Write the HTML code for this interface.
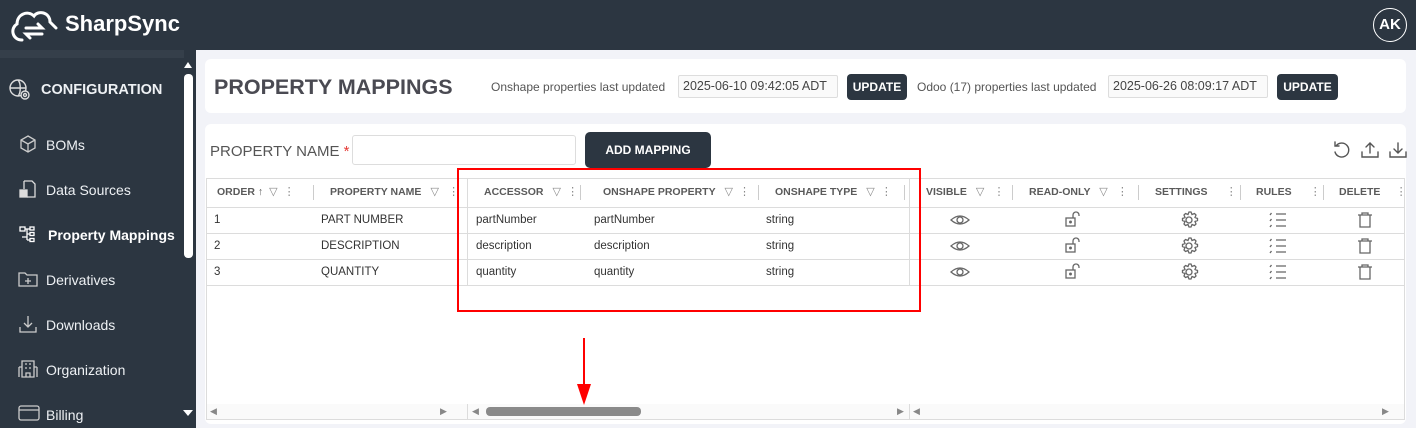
<!DOCTYPE html>
<html><head><meta charset="utf-8"><style>
*{box-sizing:border-box;margin:0;padding:0}
body{width:1416px;height:428px;overflow:hidden;background:#f2f3f8;font-family:"Liberation Sans",sans-serif;position:relative}
.a{position:absolute}
.hdr{left:0;top:0;width:1416px;height:50px;background:#2c3641}
.side{left:0;top:50px;width:196px;height:378px;background:#2c3641}
.nav{position:absolute;left:46px;color:#eef1f4;font-size:14px}
.ico{position:absolute;left:18px}
.card{background:#fff;border-radius:6px}
.th{position:absolute;top:178px;height:29px;line-height:29px;font-size:10.5px;color:#5a5a5a;font-weight:bold;letter-spacing:0}
.td{position:absolute;font-size:11.5px;color:#333}
.hl{position:absolute;height:1px;background:#dcdcdc}
.vl{position:absolute;width:1px;background:#dcdcdc}
.sep{position:absolute;top:185px;width:1px;height:15px;background:#ccc}
.f{color:#888;font-weight:normal;font-size:11px}
.btn{position:absolute;background:#2c3641;color:#fff;font-size:12px;font-weight:bold;text-align:center;border-radius:4px}
.ts{position:absolute;border:1px solid #ddd;background:#fafafa;font-size:12.5px;color:#444;height:23px;line-height:21px;padding:0 4px;border-radius:2px}
</style></head><body>
<div class="a hdr"></div>
<svg class="a" style="left:8px;top:6px" width="50" height="36" viewBox="0 0 50 36" fill="none" stroke="#fff" stroke-width="3" stroke-linecap="round"><path d="M14 34 C4 34 2 22 9 18 C9 8 20 4 26 10 C30 4 42 6 42 16 L48 22"/><path d="M18 22 h16 l-4 -4 M34 28 h-16 l4 4"/></svg>
<div class="a" style="left:65px;top:11px;color:#fff;font-size:22px;font-weight:bold">SharpSync</div>
<div class="a" style="left:1373px;top:8px;width:34px;height:34px;border:1.5px solid #fff;border-radius:50%;color:#fff;font-weight:bold;font-size:15px;text-align:center;line-height:31px">AK</div>

<div class="a side"></div>
<div class="a" style="left:0;top:50px;width:184px;height:8px;background:#353f4a"></div>
<div class="a" style="left:184px;top:74px;width:9px;height:184px;background:#fff;border-radius:4px"></div>
<div class="a" style="left:184px;top:62px;width:0;height:0;border:4.5px solid transparent;border-bottom:6px solid #fff;border-top:0"></div>
<div class="a" style="left:183px;top:410px;width:0;height:0;border:5px solid transparent;border-top:6px solid #fff;border-bottom:0"></div>
<svg class="ico" style="left:8px;top:78px" width="24" height="24" viewBox="0 0 24 24" fill="none" stroke="#ddd" stroke-width="1.4"><circle cx="10" cy="10" r="8"/><path d="M2 10h16M10 2c3 3 3 13 0 16"/><circle cx="17" cy="17" r="4" fill="#2c3641"/><circle cx="17" cy="17" r="1.5"/></svg>
<div class="nav" style="left:41px;top:82px;font-weight:bold;font-size:14.5px">CONFIGURATION</div>
<svg class="ico" style="top:134px" width="20" height="20" viewBox="0 0 20 20" fill="none" stroke="#ccc" stroke-width="1.3"><path d="M10 2l7 4v8l-7 4-7-4V6z M3 6l7 4 7-4 M10 10v8"/></svg>
<div class="nav" style="top:137px">BOMs</div>
<svg class="ico" style="top:179px" width="20" height="20" viewBox="0 0 20 20" fill="none" stroke="#ddd" stroke-width="1.3"><path d="M6 2h8l3 3v13H9M6 2v8"/><rect x="2" y="11" width="7" height="7" fill="#ddd"/></svg>
<div class="nav" style="top:182px">Data Sources</div>
<svg class="ico" style="top:224px" width="20" height="20" viewBox="0 0 20 20" fill="none" stroke="#fff" stroke-width="1.3"><rect x="2" y="3" width="5" height="4"/><path d="M7 5h5M9 5v11M9 10h3M4 13h5M9 16h3"/><rect x="12" y="3" width="4" height="3"/><rect x="12" y="8.5" width="4" height="3"/><rect x="12" y="14.5" width="4" height="3"/></svg>
<div class="nav" style="top:227px;font-weight:bold;color:#fff;left:48px">Property Mappings</div>
<svg class="ico" style="top:269px" width="20" height="20" viewBox="0 0 20 20" fill="none" stroke="#ccc" stroke-width="1.3"><path d="M1 4h6l2 2h10v11H1z M10 9v6M7 12h6"/></svg>
<div class="nav" style="top:272px">Derivatives</div>
<svg class="ico" style="top:314px" width="20" height="20" viewBox="0 0 20 20" fill="none" stroke="#ccc" stroke-width="1.3"><path d="M10 2v11M6 9l4 4 4-4M2 13v5h16v-5"/></svg>
<div class="nav" style="top:317px">Downloads</div>
<svg class="ico" style="top:359px" width="20" height="20" viewBox="0 0 20 20" fill="none" stroke="#ccc" stroke-width="1.3"><path d="M4 2h12v16H4zM1 8h3M16 8h3M1 8v10M19 8v10M8 18v-4h4v4M7 5h2M11 5h2M7 9h2M11 9h2"/></svg>
<div class="nav" style="top:362px">Organization</div>
<svg class="ico" style="top:404px" width="22" height="18" viewBox="0 0 22 18" fill="none" stroke="#ccc" stroke-width="1.3"><rect x="1" y="2" width="20" height="14" rx="2"/><path d="M1 6h20"/></svg>
<div class="nav" style="top:407px">Billing</div>

<div class="a card" style="left:205px;top:59px;width:1201px;height:54px"></div>
<div class="a" style="left:214px;top:75px;font-size:21.5px;color:#4a4a52;font-weight:bold">PROPERTY MAPPINGS</div>
<div class="a" style="left:491px;top:80px;font-size:12px;color:#555">Onshape properties last updated</div>
<div class="ts" style="left:678px;top:75px;width:160px">2025-06-10 09:42:05 ADT</div>
<div class="btn" style="left:847px;top:74px;width:60px;height:26px;line-height:26px">UPDATE</div>
<div class="a" style="left:917px;top:80px;font-size:12px;color:#555">Odoo (17) properties last updated</div>
<div class="ts" style="left:1108px;top:75px;width:160px">2025-06-26 08:09:17 ADT</div>
<div class="btn" style="left:1277px;top:74px;width:61px;height:26px;line-height:26px">UPDATE</div>

<div class="a card" style="left:205px;top:124px;width:1201px;height:300px"></div>
<div class="a" style="left:210px;top:143px;font-size:15px;color:#555">PROPERTY NAME <span style="color:#e53935">*</span></div>
<div class="a" style="left:352px;top:135px;width:224px;height:30px;border:1px solid #ddd;border-radius:3px"></div>
<div class="btn" style="left:585px;top:132px;width:126px;height:36px;line-height:36px;border-radius:5px">ADD MAPPING</div>
<svg class="a" style="left:1332px;top:140px" width="76" height="20" viewBox="0 0 76 20" fill="none" stroke="#555" stroke-width="1.4" stroke-linecap="round"><path d="M4 6 A7 7 0 1 1 3 12 M3 2v4h4"/><path d="M38 3v10M34 7l4-4 4 4M30 12v5h16v-5"/><path d="M66 3v10M62 9l4 4 4-4M58 12v5h16v-5"/></svg>

<div class="a" style="left:206px;top:178px;width:1199px;height:242px;border:1px solid #dcdcdc;background:#fff"></div>
<div class="hl" style="left:206px;top:207px;width:1199px"></div>
<div class="hl" style="left:206px;top:233px;width:1199px"></div>
<div class="hl" style="left:206px;top:259px;width:1199px"></div>
<div class="hl" style="left:206px;top:285px;width:1199px"></div>
<div class="vl" style="left:467px;top:178px;height:107px"></div>
<div class="vl" style="left:909px;top:178px;height:107px"></div>
<div class="a" style="left:207px;top:404px;width:1197px;height:15px;background:#fafafa"></div>
<div class="vl" style="left:467px;top:404px;height:15px"></div>
<div class="vl" style="left:909px;top:404px;height:15px"></div>
<div class="a" style="left:486px;top:407px;width:155px;height:9px;background:#8a8a8a;border-radius:4px"></div>
<div class="a" style="left:210px;top:406px;font-size:9px;color:#888">◀</div>
<div class="a" style="left:440px;top:406px;font-size:9px;color:#888">▶</div>
<div class="a" style="left:472px;top:406px;font-size:9px;color:#888">◀</div>
<div class="a" style="left:897px;top:406px;font-size:9px;color:#888">▶</div>
<div class="a" style="left:913px;top:406px;font-size:9px;color:#888">◀</div>
<div class="a" style="left:1382px;top:406px;font-size:9px;color:#888">▶</div>

<div class="th" style="left:217px">ORDER ↑ <span class="f">&nbsp;▽ &nbsp;⋮</span></div>
<div class="sep" style="left:313px"></div>
<div class="th" style="left:330px">PROPERTY NAME <span class="f">&nbsp;&nbsp;▽ &nbsp;&nbsp;⋮</span></div>
<div class="th" style="left:484px">ACCESSOR <span class="f">&nbsp;&nbsp;▽ &nbsp;⋮</span></div>
<div class="sep" style="left:580px"></div>
<div class="th" style="left:603px">ONSHAPE PROPERTY <span class="f">&nbsp;&nbsp;▽ &nbsp;⋮</span></div>
<div class="sep" style="left:758px"></div>
<div class="th" style="left:775px">ONSHAPE TYPE <span class="f">&nbsp;&nbsp;▽ &nbsp;⋮</span></div>
<div class="sep" style="left:904px"></div>
<div class="th" style="left:926px">VISIBLE <span class="f">&nbsp;&nbsp;▽ &nbsp;&nbsp;⋮</span></div>
<div class="sep" style="left:1012px"></div>
<div class="th" style="left:1029px">READ-ONLY <span class="f">&nbsp;&nbsp;▽ &nbsp;&nbsp;⋮</span></div>
<div class="sep" style="left:1138px"></div>
<div class="th" style="left:1155px">SETTINGS <span class="f">&nbsp;&nbsp;&nbsp;&nbsp;&nbsp;⋮</span></div>
<div class="sep" style="left:1240px"></div>
<div class="th" style="left:1256px">RULES <span class="f">&nbsp;&nbsp;&nbsp;&nbsp;&nbsp;⋮</span></div>
<div class="sep" style="left:1323px"></div>
<div class="th" style="left:1339px">DELETE <span class="f">&nbsp;&nbsp;&nbsp;&nbsp;⋮</span></div>

<div class="td" style="left:214px;top:214px">1</div><div class="td" style="left:321px;top:214px">PART NUMBER</div><div class="td" style="left:476px;top:214px">partNumber</div><div class="td" style="left:594px;top:214px">partNumber</div><div class="td" style="left:766px;top:214px">string</div>
<div class="td" style="left:214px;top:240px">2</div><div class="td" style="left:321px;top:240px">DESCRIPTION</div><div class="td" style="left:476px;top:240px">description</div><div class="td" style="left:594px;top:240px">description</div><div class="td" style="left:766px;top:240px">string</div>
<div class="td" style="left:214px;top:266px">3</div><div class="td" style="left:321px;top:266px">QUANTITY</div><div class="td" style="left:476px;top:266px">quantity</div><div class="td" style="left:594px;top:266px">quantity</div><div class="td" style="left:766px;top:266px">string</div>

<svg class="a" style="left:940px;top:207px" width="460" height="78" viewBox="0 0 460 78" fill="none" stroke="#666" stroke-width="1.3">
<defs><g id="r">
<path d="M11 13 q9 -8 18 0 q-9 8 -18 0z"/><circle cx="20" cy="13" r="3"/>
<rect x="126" y="11" width="9" height="8"/><circle cx="130.5" cy="15" r="0.8" fill="#666"/><path d="M133 11 v-3 a3 3 0 0 1 6 0 v1"/>
<circle cx="249" cy="13" r="3"/><path d="M249 5 l2 0 l1 2.5 l2.5 -1 l1.5 1.5 l-1 2.5 l2.5 1 v2 l-2.5 1 l1 2.5 l-1.5 1.5 l-2.5 -1 l-1 2.5 h-2 l-1 -2.5 l-2.5 1 l-1.5 -1.5 l1 -2.5 l-2.5 -1 v-2 l2.5 -1 l-1 -2.5 l1.5 -1.5 l2.5 1 z"/>
<path d="M336 7h10M336 13h10M336 19h10M330 8l1.5 -2M330 14l1.5 -2M330 20l1.5 -2"/>
<path d="M418 8h14M422 8v-2h6v2M420 8v12h10v-12"/>
</g></defs>
<use href="#r"/><use href="#r" y="26"/><use href="#r" y="52"/></svg>

<div class="a" style="left:457px;top:168px;width:464px;height:144px;border:2px solid #f00"></div>
<div class="a" style="left:583px;top:338px;width:2px;height:52px;background:#f00"></div>
<div class="a" style="left:577px;top:384px;width:0;height:0;border-left:7px solid transparent;border-right:7px solid transparent;border-top:21px solid #f00"></div>
</body></html>
